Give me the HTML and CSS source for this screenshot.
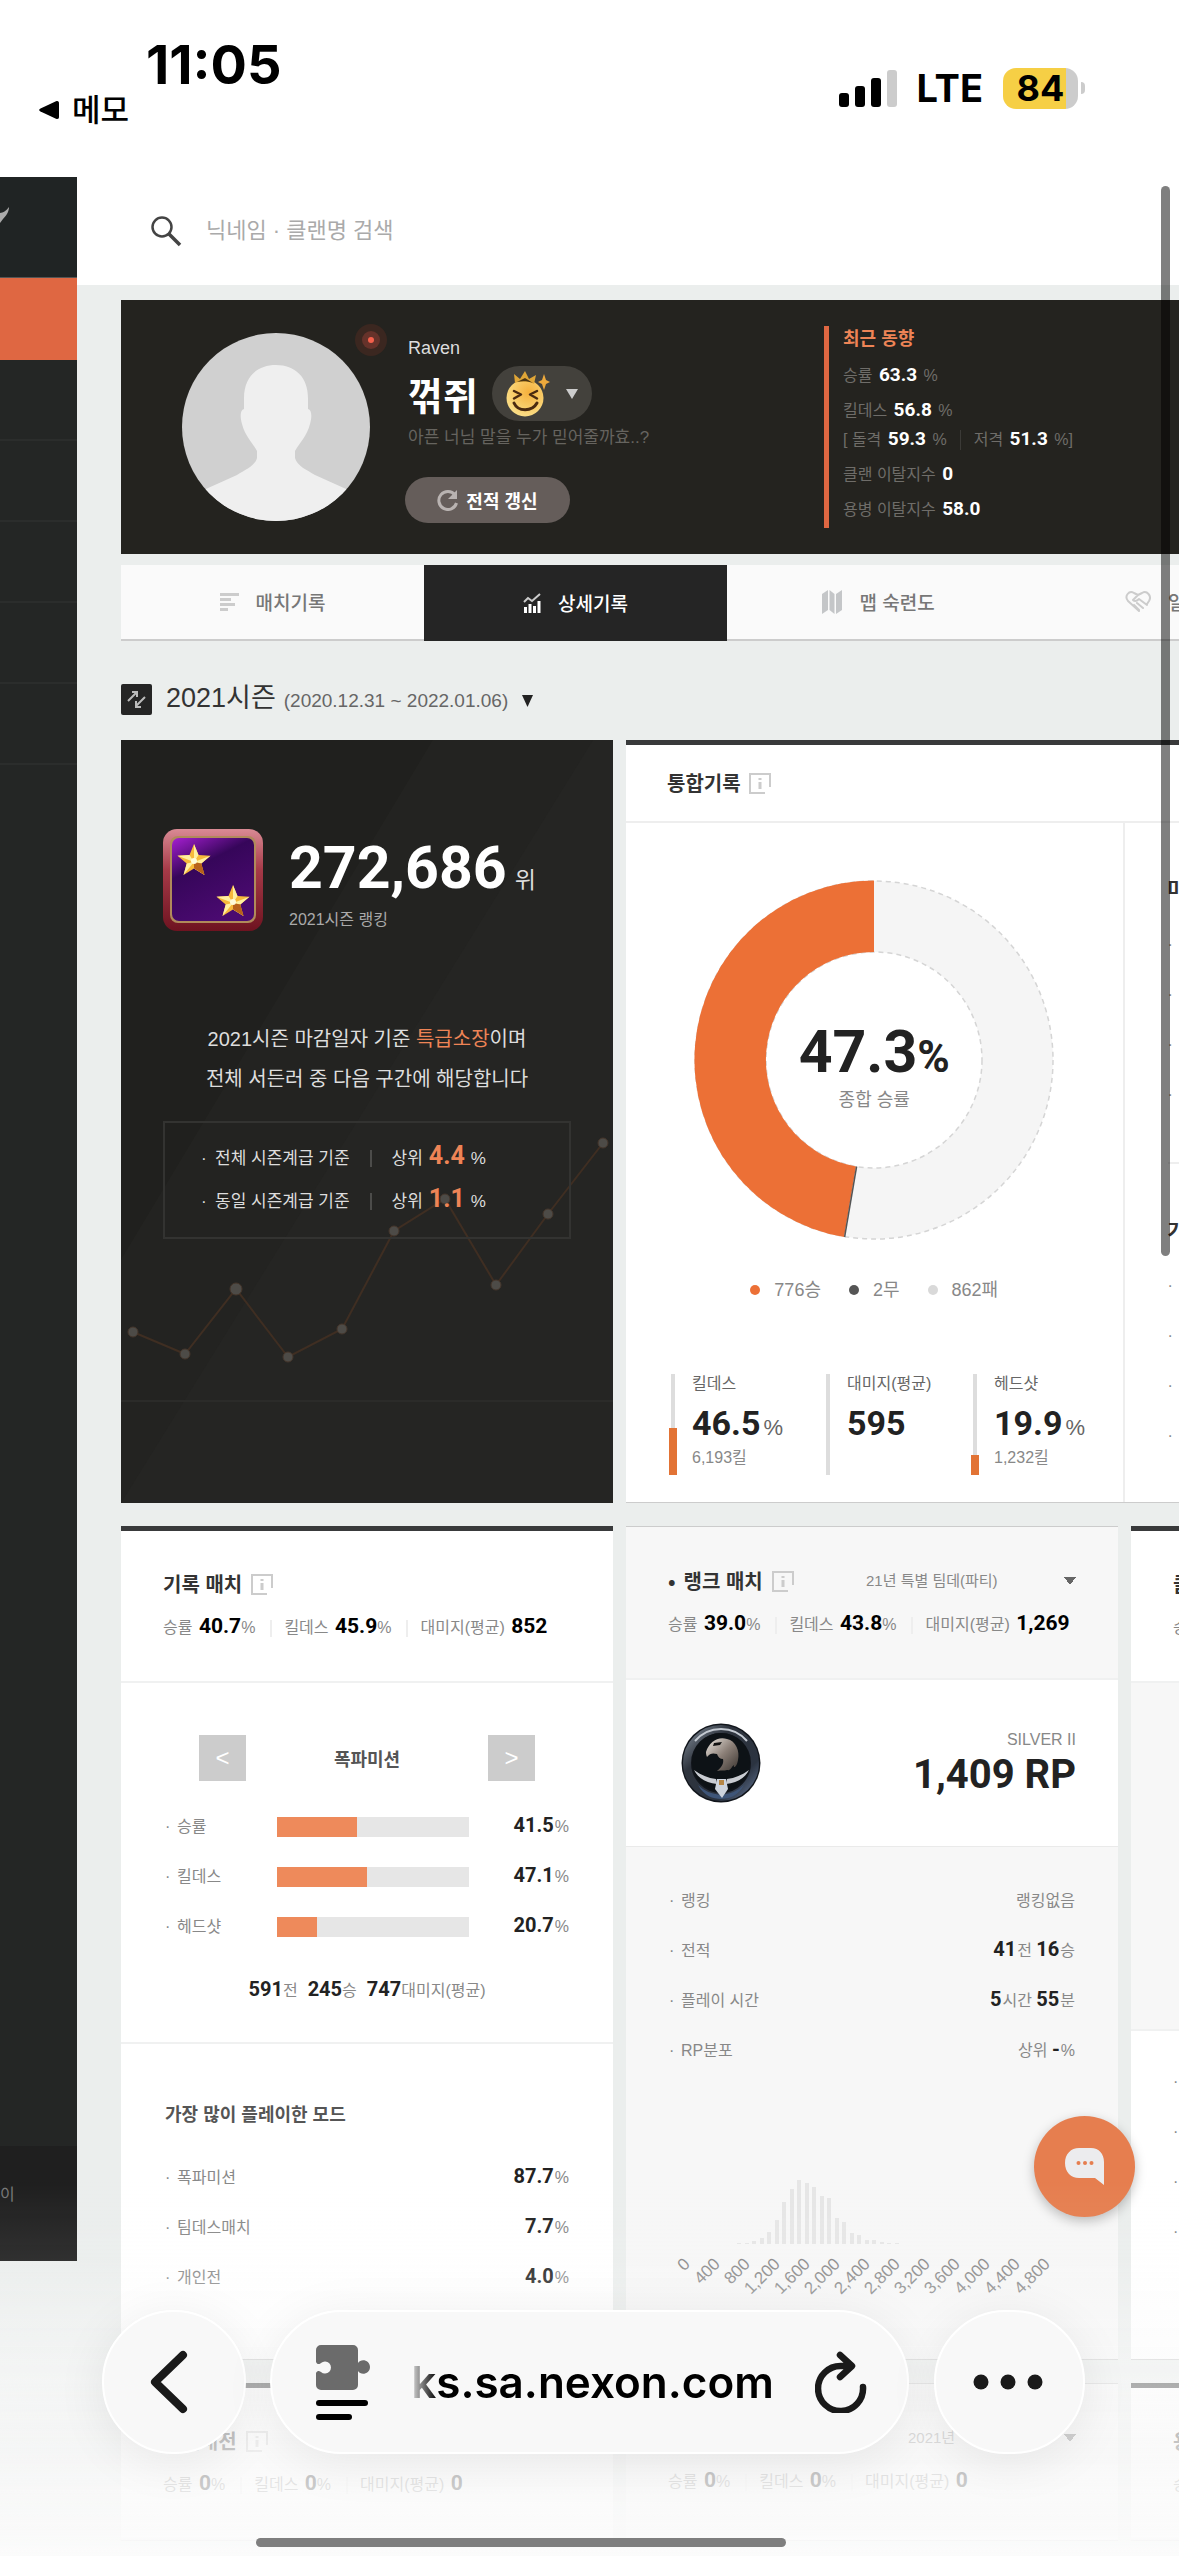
FILE: index.html
```html
<!DOCTYPE html>
<html lang="ko">
<head>
<meta charset="utf-8">
<meta name="viewport" content="width=device-width, initial-scale=1">
<title>상세기록</title>
<link rel="stylesheet" href="styles.css">
</head>
<body>
<svg class="defs" aria-hidden="true">
  <symbol id="info" viewBox="0 0 22 21"><path d="M16 20H1V1h20v13" fill="none" stroke="#ccc" stroke-width="2"/><path d="M9.500 5h3v2h-3zM9.500 9h3v7h-3z" fill="#ccc"/></symbol>
  <symbol id="star" viewBox="0 0 34 34"><path d="M17 1l4.500 11 12 .8-9.200 7.600L27.500 32 17 25.500 6.500 32l3.200-11.600L.5 12.800l12-.8z" fill="#f7b93b"/><path d="M17 1v18l4.500-7zM33.500 12.800L17 19l7.300 1.400zM27.500 32L17 19v6.500zM6.500 32L17 19l-7.300 1.400zM.5 12.800L17 19l-4.500-7z" fill="#fff0a0"/><path d="M17 25.500l10.500 6.500-3.200-11.600L17 19z" fill="#b8621a"/><circle cx="17" cy="18" r="3" fill="#fffbd8"/></symbol>
</svg>

<div class="status">
  <div class="status-left">
    <time class="clock">11:05</time>
    <a class="back-app" href="#"><svg width="22" height="20" viewBox="0 0 22 20"><path d="M2.500 8.500L18 1.200c2-.8 3 .2 3 2v13.600c0 1.800-1 2.800-3 2L2.500 11.500c-1.800-1-1.800-2 0-3z"/></svg>메모</a>
  </div>
  <div class="status-right">
    <svg width="58" height="37" viewBox="0 0 58 37"><rect x="0" y="23" width="10" height="14" rx="3"/><rect x="16" y="16" width="10" height="21" rx="3"/><rect x="32" y="8" width="10" height="29" rx="3"/><rect x="48" y="0" width="10" height="37" rx="3" fill="#ccc"/></svg>
    <span class="lte">LTE</span>
    <span class="battery"><span class="battery-body">84</span><i></i></span>
  </div>
</div>

<div class="page">
  <nav class="side">
    <a class="side-logo" href="#"><svg width="12" height="18" viewBox="0 0 12 18"><path d="M0 6C3 6 7 3 9 0 9 5 6 9 3 12L0 16z" fill="#aaa"/></svg></a>
    <a class="side-item on" href="#"></a>
    <a class="side-item" href="#"></a><a class="side-item" href="#"></a><a class="side-item" href="#"></a><a class="side-item" href="#"></a><a class="side-item" href="#"></a>
    <div class="side-foot">이</div>
  </nav>

  <div class="body">
    <form class="search">
      <svg width="32" height="32" viewBox="0 0 32 32" fill="none" stroke="#444"><circle cx="12" cy="12" r="9.500" stroke-width="2.500"/><path d="M19 19l11 11" stroke-width="3.500"/></svg>
      <input type="text" aria-label="검색" placeholder="닉네임 · 클랜명 검색">
    </form>

    <main>
      <section class="profile">
        <div class="avatar">
          <svg viewBox="0 0 188 188"><defs><clipPath id="face"><circle cx="94" cy="94" r="94"/></clipPath></defs><circle cx="94" cy="94" r="94" fill="#d0d0d0"/><path clip-path="url(#face)" d="M62 65c0-21 13-33 32-33s32 12 32 33v11c4 1 4 8 2 15-3 12-10 18-15 27v7c2 8 12 12 20 17l40 18v30H15v-30l40-18c8-5 18-9 20-17v-7c-5-9-12-15-15-27-2-7-2-14 2-15z" fill="#efefef"/></svg>
          <svg class="live" viewBox="0 0 32 32"><circle cx="16" cy="16" r="16" fill="#3b2720"/><circle cx="16" cy="16" r="9" fill="#66322a"/><circle cx="16" cy="16" r="3" fill="#f4604c"/></svg>
        </div>
        <div class="who">
          <div class="clan">Raven</div>
          <div class="name-row">
            <h1>꺾쥐</h1>
            <button class="emoji" type="button" aria-label="이모티콘">
              <svg width="44" height="48" viewBox="0 0 44 48"><defs><radialGradient id="skin" cx=".6" cy=".35" r=".7"><stop offset="0" stop-color="#f5b03c"/><stop offset="1" stop-color="#fbe08a"/></radialGradient></defs><circle cx="19" cy="28" r="18.500" fill="url(#skin)"/><path d="M9 13L8 4l6 5 5-8 4 8 7-4-2 9c-6-3-13-3-19-1z" fill="#e0a637"/><path d="M11 12l8-4 8 5c-5-2-11-2-16-1z" fill="#4a3413"/><path d="M38 4l2 6 4 2-4 2-2 6-2-6-4-2 4-2z" fill="#eda93c"/><g fill="none" stroke="#4a2a10" stroke-width="2.500" stroke-linecap="round" stroke-linejoin="round"><path d="M8 21l7 3.500-7 4M31 21l-7 3.500 7 4"/><path d="M8 33c4 9 18 9 23 0" stroke-width="3"/></g></svg>
              <svg width="12" height="10" viewBox="0 0 12 10"><path d="M0 0h12L6 10z" fill="#ccc"/></svg>
            </button>
          </div>
          <p class="motto">아픈 너님 말을 누가 믿어줄까효..?</p>
          <button class="refresh" type="button"><svg width="22" height="22" viewBox="0 0 22 22"><path d="M18 6a9 9 0 1 0 1.500 8" fill="none" stroke="#b9b3b1" stroke-width="3"/><path d="M20 1v9h-9z" fill="#b9b3b1"/></svg>전적 갱신</button>
        </div>
        <div class="trend">
          <h2>최근 동향</h2>
          <p>승률 <b>63.3</b> %</p>
          <p>킬데스 <b>56.8</b> %</p>
          <p class="split"><span>[ 돌격 <b>59.3</b> %</span><i></i><span>저격 <b>51.3</b> %]</span></p>
          <p>클랜 이탈지수 <b>0</b></p>
          <p>용병 이탈지수 <b>58.0</b></p>
        </div>
      </section>

      <nav class="tabs">
        <a href="#"><svg width="19" height="18" viewBox="0 0 19 18" fill="#ccc"><path d="M0 0h19v3H0zM0 5h11v3H0zM0 10h15v3H0zM0 15h8v3H0z"/></svg>매치기록</a>
        <a href="#" class="on"><svg width="18" height="20" viewBox="0 0 18 20" fill="#fff"><path d="M1 14h3v6H1zM5.500 11h3v9h-3zM10 13h3v7h-3zM14.500 8h3v12h-3z"/><path d="M1 9l4-4 4 3 8-7" fill="none" stroke="#ccc" stroke-width="2"/></svg>상세기록</a>
        <a href="#"><svg width="20" height="24" viewBox="0 0 20 24" fill="#c4c6c8"><path d="M0 4l6-4v20l-6 4zM7.500 0l5 4v20l-5-4zM14 4l6-4v20l-6 4z"/></svg>맵 숙련도</a>
        <a href="#" class="cut"><svg width="26" height="22" viewBox="0 0 26 22" fill="none" stroke="#ccc" stroke-width="2" stroke-linecap="round" stroke-linejoin="round"><path d="M14 20L3 10C-1 5 4-1 9 2l4 2 4-2c5-3 10 3 7 8l-2 3M13 4L8 9c2 2 4 1 6-1l8 6M12 12l6 5M9 14l5 5"/></svg>일</a>
      </nav>

      <h2 class="season">
        <svg width="31" height="31" viewBox="0 0 31 31"><rect width="31" height="31" rx="2" fill="#252525"/><g fill="none" stroke="#bbb" stroke-width="2"><path d="M7 17l9-9M11 8h5v5M24 13l-9 9M15 17v6h5"/></g></svg>
        <button type="button">2021시즌 <small>(2020.12.31 ~ 2022.01.06)</small><svg width="11" height="12" viewBox="0 0 11 12"><path d="M0 0h11L5.500 12z" fill="#222"/></svg></button>
      </h2>

      <div class="board">
        <section class="card rank-card">
          <svg class="rank-bg" viewBox="0 0 492 763" preserveAspectRatio="none">
            <path d="M0 0h312L0 520z" fill="#20201e"/><path d="M312 0h160L0 763V520z" fill="#232321"/>
            <path d="M0 661h492" stroke="#2b2b29" stroke-width="2"/>
            <polyline points="12,592 64,614 115,549 167,617 221,589 273,491 324,459 375,545 427,474 482,403" fill="none" stroke="#3f2e22" stroke-width="2"/>
            <g fill="#4d4b47" stroke="#45362b"><circle cx="12" cy="592" r="5"/><circle cx="64" cy="614" r="5"/><circle cx="115" cy="549" r="6"/><circle cx="167" cy="617" r="5"/><circle cx="221" cy="589" r="5"/><circle cx="273" cy="491" r="5"/><circle cx="324" cy="459" r="5"/><circle cx="375" cy="545" r="5"/><circle cx="427" cy="474" r="5"/><circle cx="482" cy="403" r="5"/></g>
          </svg>
          <div class="rank-top">
            <svg width="100" height="102" viewBox="0 0 100 102">
              <defs><linearGradient id="frame" x1="0" y1="0" x2="0" y2="1"><stop offset="0" stop-color="#d98a94"/><stop offset=".4" stop-color="#a63a48"/><stop offset="1" stop-color="#6e1320"/></linearGradient><linearGradient id="plum" x1="0" y1="0" x2=".5" y2="1"><stop offset="0" stop-color="#a51fd0"/><stop offset=".4" stop-color="#36065a"/><stop offset="1" stop-color="#4a0a70"/></linearGradient></defs>
              <rect width="100" height="102" rx="14" fill="url(#frame)"/><rect x="7" y="7" width="86" height="87" rx="8" fill="#b08a5a"/><rect x="9" y="9" width="82" height="83" rx="7" fill="url(#plum)"/>
              <use href="#star" x="14" y="14" width="34" height="34"/><use href="#star" x="53" y="55" width="34" height="34"/>
            </svg>
            <div><p class="rank-no"><b>272,686</b>위</p><p class="rank-sub">2021시즌 랭킹</p></div>
          </div>
          <p class="rank-text">2021시즌 마감일자 기준 <em>특급소장</em>이며<br>전체 서든러 중 다음 구간에 해당합니다</p>
          <ul class="rank-box">
            <li><span>전체 시즌계급 기준</span><i></i>상위<b>4.4</b>%</li>
            <li><span>동일 시즌계급 기준</span><i></i>상위<b>1.1</b>%</li>
          </ul>
        </section>

        <section class="card total">
          <header><h3>통합기록</h3><svg class="info"><use href="#info"/></svg></header>
          <div class="total-body">
            <div class="total-left">
              <div class="donut">
                <svg viewBox="0 0 360 360">
                  <circle cx="180" cy="180" r="143.500" fill="none" stroke="#f5f5f5" stroke-width="71"/>
                  <circle cx="180" cy="180" r="179" fill="none" stroke="#d5d5d5" stroke-width="1.500" stroke-dasharray="5 4"/>
                  <circle cx="180" cy="180" r="108" fill="none" stroke="#d5d5d5" stroke-width="1.500" stroke-dasharray="5 4"/>
                  <path d="M180 0.500A179.500 179.500 0 0 0 150.100 357L162 286.500A108 108 0 0 1 180 72z" fill="#ec7036"/>
                  <path d="M150.600 357L162.600 286.500" stroke="#555" stroke-width="1.500"/>
                </svg>
                <div><p class="pct">47.3<small>%</small></p><p class="pct-sub">종합 승률</p></div>
              </div>
              <ul class="legend"><li class="win">776승</li><li class="tie">2무</li><li class="loss">862패</li></ul>
              <div class="trio">
                <div><i class="gauge"><i style="height:46.5%"></i></i><p>킬데스<strong><b>46.5</b>%</strong><span>6,193킬</span></p></div>
                <div><i class="gauge"></i><p>대미지(평균)<strong><b>595</b></strong></p></div>
                <div><i class="gauge"><i style="height:19.9%"></i></i><p>헤드샷<strong><b>19.9</b>%</strong><span>1,232킬</span></p></div>
              </div>
            </div>
            <div class="total-right">
              <div class="part"><h4>마</h4><ul class="rows"><li></li><li></li><li></li><li></li></ul></div>
              <div class="part low"><h4>가</h4><ul class="rows"><li></li><li></li><li></li><li></li></ul></div>
            </div>
          </div>
        </section>

        <section class="card">
          <header class="match">
            <div class="title"><h3>기록 매치</h3><svg class="info"><use href="#info"/></svg></div>
            <ul class="stats"><li>승률 <b>40.7</b>%</li><li>킬데스 <b>45.9</b>%</li><li>대미지(평균) <b>852</b></li></ul>
          </header>
          <div class="mode">
            <div class="pager"><button type="button" aria-label="이전">&lt;</button><h4>폭파미션</h4><button type="button" aria-label="다음">&gt;</button></div>
            <ul class="rows bars">
              <li><span>승률</span><div class="bar"><i style="width:41.5%"></i></div><em><b>41.5</b>%</em></li>
              <li><span>킬데스</span><div class="bar"><i style="width:47.1%"></i></div><em><b>47.1</b>%</em></li>
              <li><span>헤드샷</span><div class="bar"><i style="width:20.7%"></i></div><em><b>20.7</b>%</em></li>
            </ul>
            <p class="sum"><span><b>591</b>전</span><span><b>245</b>승</span><span><b>747</b>대미지(평균)</span></p>
          </div>
          <div class="most">
            <h4>가장 많이 플레이한 모드</h4>
            <ul class="rows"><li><span>폭파미션</span><em><b>87.7</b>%</em></li><li><span>팀데스매치</span><em><b>7.7</b>%</em></li><li><span>개인전</span><em><b>4.0</b>%</em></li></ul>
          </div>
        </section>

        <section class="card ranked">
          <header class="match">
            <div class="title"><h3>랭크 매치</h3><svg class="info"><use href="#info"/></svg>
              <select aria-label="시즌"><option>21년 특별 팀데(파티)</option></select></div>
            <ul class="stats"><li>승률 <b>39.0</b>%</li><li>킬데스 <b>43.8</b>%</li><li>대미지(평균) <b>1,269</b></li></ul>
          </header>
          <div class="tier">
            <svg width="80" height="80" viewBox="0 0 80 80"><defs><linearGradient id="rim" x1="0" y1="0" x2="1" y2="1"><stop offset="0" stop-color="#7d8794"/><stop offset=".3" stop-color="#2e343d"/><stop offset=".75" stop-color="#2b3340"/><stop offset="1" stop-color="#5f7190"/></linearGradient><linearGradient id="steel" x1="0" y1="0" x2="1" y2="1"><stop offset="0" stop-color="#ece8e2"/><stop offset=".5" stop-color="#8c8078"/><stop offset="1" stop-color="#3a3430"/></linearGradient></defs>
              <circle cx="40" cy="40" r="39.500" fill="#11151b"/><circle cx="40" cy="40" r="34" fill="none" stroke="url(#rim)" stroke-width="8"/><path d="M14 18A34 34 0 0 1 66 18" fill="none" stroke="#c4cad2" stroke-width="2"/><circle cx="40" cy="39" r="29" fill="#0d1216"/>
              <path d="M25 29c3-10 12-16 21-13 9 2 13 12 11 21-1 7-5 9-4 5-3 2-3 6-7 5-3 1-5 0-10 1 5-4 7-8 6-12-3 0-5-2-6-5-4-1-7-1-10 3-1-2-1-4-1-5z" fill="url(#steel)"/><path d="M33 20l8-1-2 3-7 1z" fill="#111"/>
              <path d="M13 47c7 5 14 8 22 9l1 5c-11-1-19-6-23-14zM68 47c-7 5-14 8-22 9l-1 5c11-1 19-6 23-14z" fill="#c9ccd2"/><path d="M17 62c6 6 14 9 23 10 9-1 17-4 23-10-6 11-15 14-23 14s-17-3-23-14z" fill="#3e5578"/><path d="M36 56h9l2 10-6 9-7-9z" fill="#cdd3dc"/><path d="M38 57h5v5h-5z" fill="#b58645"/></svg>
            <div><p>SILVER II</p><strong>1,409 RP</strong></div>
          </div>
          <ul class="rows">
            <li><span>랭킹</span><em>랭킹없음</em></li>
            <li><span>전적</span><em><b>41</b>전 <b>16</b>승</em></li>
            <li><span>플레이 시간</span><em><b>5</b>시간 <b>55</b>분</em></li>
            <li><span>RP분포</span><em>상위 <b>-</b>%</em></li>
          </ul>
          <svg class="hist" viewBox="0 0 492 170">
            <g fill="#e6e6e6"><path d="M111 75h4v1h-4zM119 75h4v1h-4zM126 73h4v3h-4zM134 70h4v6h-4zM141 64h4v12h-4zM149 52h4v24h-4zM156 34h4v42h-4zM164 21h4v55h-4zM171 12h4v64h-4zM179 15h4v61h-4zM186 19h4v57h-4zM194 28h4v48h-4zM201 30h4v46h-4zM209 50h4v26h-4zM216 54h4v22h-4zM224 65h4v11h-4zM231 67h4v9h-4zM239 72h4v4h-4zM246 72h4v4h-4zM254 74h4v2h-4zM261 75h4v1h-4zM269 75h4v1h-4z"/></g>
            <g class="ticks"><text transform="translate(65 97) rotate(-45)">0</text><text transform="translate(95 97) rotate(-45)">400</text><text transform="translate(125 97) rotate(-45)">800</text><text transform="translate(155 97) rotate(-45)">1,200</text><text transform="translate(185 97) rotate(-45)">1,600</text><text transform="translate(215 97) rotate(-45)">2,000</text><text transform="translate(245 97) rotate(-45)">2,400</text><text transform="translate(275 97) rotate(-45)">2,800</text><text transform="translate(305 97) rotate(-45)">3,200</text><text transform="translate(335 97) rotate(-45)">3,600</text><text transform="translate(365 97) rotate(-45)">4,000</text><text transform="translate(395 97) rotate(-45)">4,400</text><text transform="translate(425 97) rotate(-45)">4,800</text></g>
          </svg>
        </section>

        <section class="card third">
          <header class="match"><div class="title"><h3>클</h3></div><ul class="stats"><li>승</li></ul></header>
          <div class="blank"></div>
          <ul class="rows"><li></li><li></li><li></li><li></li></ul>
        </section>

        <section class="card">
          <header class="match"><div class="title"><h3>클랜대전</h3><svg class="info"><use href="#info"/></svg></div>
            <ul class="stats"><li>승률 <b>0</b>%</li><li>킬데스 <b>0</b>%</li><li>대미지(평균) <b>0</b></li></ul></header>
        </section>
        <section class="card ranked">
          <header class="match"><div class="title"><h3>랭크전</h3><select class="year" aria-label="연도"><option>2021년</option></select></div>
            <ul class="stats"><li>승률 <b>0</b>%</li><li>킬데스 <b>0</b>%</li><li>대미지(평균) <b>0</b></li></ul></header>
        </section>
        <section class="card"><header class="match"><div class="title"><h3>용</h3></div><ul class="stats"><li>승</li></ul></header></section>
      </div>
    </main>
  </div>
</div>

<div class="scrollbar"></div>
<button class="chat" type="button" aria-label="채팅"><svg width="40" height="37" viewBox="0 0 40 37"><path d="M14 0h12c8 0 13 6 13 14v23l-9-7H14C6 30 0 24 0 15S6 0 14 0z" fill="#ececee"/><g fill="#e67e4f"><circle cx="13.500" cy="15" r="2"/><circle cx="20" cy="15" r="2"/><circle cx="26.500" cy="15" r="2"/></g></svg></button>
<div class="veil"></div>
<nav class="browser">
  <button class="glass round" type="button" aria-label="뒤로"><svg width="38" height="64" viewBox="0 0 38 64"><path d="M33 5L5 32l28 27" fill="none" stroke="#1a1a1a" stroke-width="8" stroke-linecap="round" stroke-linejoin="round"/></svg></button>
  <div class="glass address">
    <svg width="54" height="75" viewBox="0 0 54 75"><path d="M5 0h32a5 5 0 0 1 5 5v13c3-5 12-3 12 4s-9 9-12 4v14a5 5 0 0 1-5 5H5a5 5 0 0 1-5-5V28c2-4 5-1 5-1a6 6 0 1 0 0-9s-3 3-5-1V5a5 5 0 0 1 5-5z" fill="#6b6b6b"/><rect y="55" width="52" height="6" rx="3"/><rect y="69" width="36" height="6" rx="3"/></svg>
    <span class="url">ks.sa.nexon.com</span>
    <button type="button" aria-label="새로고침"><svg width="52" height="62" viewBox="0 0 52 62" fill="none" stroke="#1a1a1a" stroke-width="6.500" stroke-linecap="round" stroke-linejoin="round"><path d="M48 36A22.500 22.500 0 1 1 26 15h10M25 4l12 11-12 11"/></svg></button>
  </div>
  <button class="glass more" type="button" aria-label="더보기"><svg width="70" height="16" viewBox="0 0 70 16" fill="#1a1a1a"><circle cx="8" cy="8" r="7.500"/><circle cx="35" cy="8" r="7.500"/><circle cx="62" cy="8" r="7.500"/></svg></button>
</nav>
<div class="home"></div>
</body>
</html>
```
FILE: styles.css
```css
* { box-sizing: border-box; margin: 0; padding: 0; }
html, body { height: 100%; }
body {
  display: flex; flex-direction: column; overflow: hidden;
  background: #fff; color: #888;
  font: 16px/24px "Liberation Sans", "Noto Sans CJK KR", sans-serif;
}
b, .pct, .tier strong { font-family: Roboto, "Noto Sans CJK KR", sans-serif; font-weight: 700; }
b { line-height: 1; }
ul { list-style: none; }
em, i { font-style: normal; }
a { color: inherit; text-decoration: none; }
button, input, select { font: inherit; color: inherit; border: 0; background: none; }
svg { flex: none; display: block; }
.defs { position: absolute; width: 0; height: 0; }
h3, h4 { font-size: 20px; line-height: 26px; font-weight: 700; color: #333; font-family: "Noto Sans CJK KR", sans-serif; }

/* phone status bar */
.status { flex: none; height: 177px; display: flex; justify-content: space-between; color: #000; font-family: Inter, "Noto Sans CJK KR", sans-serif; }
.status-left { padding: 36px 0 0 38px; }
.clock { display: block; padding-left: 108px; font-size: 54px; line-height: 58px; font-weight: 700; }
.back-app { display: flex; align-items: center; gap: 12px; font-size: 31px; line-height: 32px; font-weight: 500; }
.status-right { display: flex; align-items: center; gap: 20px; height: 76px; margin: 50px 94px 0 0; }
.lte { font-size: 38px; font-weight: 700; }
.battery { display: flex; align-items: center; gap: 3px; }
.battery-body { width: 75px; height: 41px; border-radius: 13px; background: linear-gradient(90deg, #f6cf45 84%, #ccc 84%); font-size: 36px; line-height: 41px; font-weight: 700; text-align: center; }
.battery i { width: 4px; height: 12px; border-radius: 0 4px 4px 0; background: #ccc; }

.page { flex: 1; min-height: 0; display: flex; align-items: flex-start; overflow: hidden; background: #ebeeed; }

/* left menu */
.side { flex: none; width: 77px; height: calc(100vh - 472px); display: flex; flex-direction: column; background: #242625; }
.side-logo { height: 101px; padding-top: 30px; background: #202424; border-bottom: 1px solid #555; }
.side-item { height: 81px; border-bottom: 2px solid #2b2d2c; }
.side-item.on { height: 82px; background: #df6742; border: 0; }
.side-foot { margin-top: auto; height: 115px; line-height: 98px; background: #1f1f1f; color: #777; }

.body { flex: 1; min-width: 0; overflow: hidden; }
.search { display: flex; align-items: center; gap: 24px; height: 108px; padding: 0 73px; background: #fff; }
.search input { flex: 1; min-width: 0; font-size: 22px; line-height: 32px; outline: 0; }
.search input::placeholder { color: #aaa; opacity: 1; }
main { padding: 15px 0 0 44px; }

/* profile */
.profile { display: flex; height: 254px; padding: 0 0 0 61px; background: #24231f; }
.avatar { position: relative; flex: none; align-self: center; width: 188px; }
.live { position: absolute; top: -9px; right: -17px; width: 32px; }
.who { flex: none; width: 416px; margin-left: 38px; padding-top: 36px; }
.clan { color: #ddd; font-size: 18px; }
.name-row { display: flex; align-items: center; gap: 14px; margin-top: 6px; }
h1 { color: #fff; font: 700 38px/54px "Noto Sans CJK KR", sans-serif; }
.emoji { display: flex; align-items: center; gap: 16px; height: 55px; padding: 0 14px; border-radius: 28px; background: #43413c; }
.motto { margin-top: 5px; color: #66645f; font-size: 17px; }
.refresh { display: flex; align-items: center; justify-content: center; gap: 7px; width: 165px; height: 46px; margin: 27px 0 0 -3px; border-radius: 23px; background: #655d5a; color: #fff; font: 700 18px/26px "Noto Sans CJK KR", sans-serif; }
.trend { align-self: flex-start; height: 202px; margin-top: 26px; padding-left: 14px; border-left: 5px solid #df6742; color: #6f6d69; white-space: nowrap; }
.trend h2 { color: #ee8456; font: 700 18px/22px "Noto Sans CJK KR", sans-serif; margin-bottom: 10px; }
.trend p { line-height: 35px; }
.trend b { margin: 0 2px; color: #fff; font-size: 19px; }
.trend .split { display: flex; align-items: center; line-height: 24px; margin-bottom: 5px; }
.split i { width: 1px; height: 20px; margin: 0 13px; background: #3b3a37; }

.tabs { display: flex; margin-top: 11px; border-bottom: 2px solid #ccc; background: #fafafa; }
.tabs a { flex: 0 0 303px; display: flex; align-items: center; justify-content: center; gap: 17px; height: 74px; color: #777; font: 500 19px/26px "Noto Sans CJK KR", sans-serif; }
.tabs .on { height: 76px; margin-bottom: -2px; background: #252525; color: #fff; }
.tabs .cut { justify-content: flex-start; padding-left: 95px; }

.season { display: flex; align-items: center; gap: 14px; height: 99px; padding-top: 18px; font-weight: 400; color: #333; }
.season button { display: flex; align-items: baseline; gap: 8px; font-size: 27px; line-height: 34px; }
.season small { font-size: 19px; color: #666; }
.season button svg { margin-left: 6px; }

/* card grid; the third column runs past the right edge */
.board { display: grid; grid-template-columns: repeat(3, 492px); gap: 23px 13px; }
.card { border-top: 5px solid #393a3b; border-bottom: 1px solid #ccc; background: #fff; }

.rank-card { position: relative; height: 763px; padding: 89px 42px 0; border: 0; background: #252523; color: #ddd; }
.rank-bg { position: absolute; inset: 0; width: 100%; height: 100%; }
.rank-top, .rank-text, .rank-box { position: relative; }
.rank-top { display: flex; gap: 26px; height: 102px; }
.rank-no { padding-top: 9px; font-size: 23px; line-height: 56px; white-space: nowrap; }
.rank-no b { margin-right: 8px; font-size: 59px; color: #fff; }
.rank-sub { color: #aaa; }
.rank-text { margin-top: 88px; font-size: 20px; line-height: 40px; text-align: center; white-space: nowrap; }
.rank-text em { color: #ee8456; }
.rank-box { margin-top: 22px; padding: 14px 36px; border: 2px solid #333331; }
.rank-box li { display: flex; align-items: baseline; font-size: 17px; line-height: 43px; height: 43px; }
.rank-box li::before { content: "·"; width: 14px; }
.rank-box i { width: 2px; height: 17px; align-self: center; margin: 0 20px; background: #4c4c4a; }
.rank-box b { margin: 0 6px; color: #ee8456; font-size: 25px; }

.total { grid-column: span 2; }
.total header { display: flex; align-items: center; gap: 8px; height: 78px; padding-left: 41px; border-bottom: 2px solid #eee; }
.info { width: 22px; height: 21px; }
.total-body { display: flex; height: 679px; }
.total-left { flex: none; width: 50%; padding-top: 57px; border-right: 2px solid #eee; }
.donut { display: grid; place-items: center; }
.donut > * { grid-area: 1 / 1; }
.donut svg { width: 360px; }
.donut div { padding-top: 8px; text-align: center; }
.pct { color: #222; font-size: 59px; line-height: 72px; }
.pct small { font-size: 44px; line-height: 1; }
.pct-sub { font-size: 18px; }
.legend { display: flex; justify-content: center; gap: 28px; margin-top: 38px; font-size: 18px; }
.legend li { display: flex; align-items: center; gap: 14px; }
.legend li::before { content: ""; width: 10px; height: 10px; border-radius: 50%; background: #d9d9d9; }
.legend .win::before { background: #ec7036; }
.legend .tie::before { background: #555; }
.trio { display: grid; grid-template-columns: 155px 147px auto; margin: 72px 0 0 43px; }
.trio > div { display: flex; gap: 15px; }
.trio p { color: #666; line-height: 20px; }
.trio strong { display: block; height: 36px; margin: 12px 0 6px; font-size: 22px; line-height: 36px; font-weight: 400; }
.trio strong b { margin-right: 3px; font-size: 34px; color: #222; }
.trio span { color: #888; }
.gauge { display: flex; align-items: flex-end; width: 8px; height: 101px; background: linear-gradient(#ddd, #ddd) center / 4px 100% no-repeat; }
.gauge i { width: 8px; background: #e27335; }
.total-right { flex: 1; padding-left: 43px; }
.part { height: 341px; padding-top: 53px; border-bottom: 2px solid #eee; }
.part.low { border: 0; }
.part .rows { padding-top: 18px; }

/* match cards */
.match { padding: 40px 42px; border-bottom: 2px solid #f0f1f1; }
.title { display: flex; align-items: center; gap: 9px; height: 26px; }
.stats { display: flex; height: 26px; margin-top: 18px; line-height: 26px; white-space: nowrap; }
.stats b { font-size: 21px; color: #000; margin-left: 2px; }
.stats li + li { margin-left: 15px; padding-left: 14px; background: linear-gradient(#eee, #eee) left / 2px 17px no-repeat; }
.rows li { display: flex; align-items: center; height: 50px; }
.rows li::before { content: "·"; width: 12px; }
.rows em { margin-left: auto; }
.rows b, .sum b { color: #222; font-size: 20px; }
.rows em b { margin-right: 1px; }
.mode { padding: 52px 44px 38px; border-bottom: 2px solid #f0f1f1; }
.pager { display: flex; justify-content: space-between; align-items: center; padding: 0 34px; }
.pager h4, .most h4 { font-size: 18px; color: #555; }
.pager button { width: 47px; height: 46px; background: #ccc; color: #fff; font-size: 24px; }
.bars { margin-top: 21px; }
.bars span { width: 100px; }
.bar { width: 192px; height: 20px; background: #e6e6e6; }
.bar i { display: block; height: 100%; background: #ee8a5b; }
.sum { display: flex; justify-content: center; gap: 10px; height: 26px; margin-top: 26px; line-height: 26px; }
.most { padding: 56px 44px; }
.most .rows { margin-top: 27px; }

.ranked { border-top: 1px solid #ccc; background: #f7f7f7; }
.ranked .match { padding-top: 41px; }
.ranked h3::before { content: "•"; margin-right: 8px; }
select { appearance: none; margin-left: auto; width: 210px; font-size: 15px; line-height: 20px; background: linear-gradient(to bottom right, #666 50%, transparent 51%) 204px 6px / 6px 8px no-repeat, linear-gradient(to bottom left, #666 50%, transparent 51%) 198px 6px / 6px 8px no-repeat; }
select.year { width: 168px; background-position: 162px 6px, 156px 6px; }
.tier { display: flex; align-items: center; justify-content: space-between; height: 167px; padding: 0 42px 0 55px; background: #fff; border-bottom: 1px solid #eaeaea; text-align: right; }
.tier strong { display: block; color: #222; font-size: 40px; line-height: 46px; }
.ranked .rows { padding: 29px 43px 0; }
.hist { width: 100%; margin-top: 92px; display: block; }
.ticks { font-size: 17px; fill: #888; text-anchor: end; }
.third .blank { height: 348px; background: #f7f7f7; border-bottom: 2px solid #f0f1f1; }
.third .rows { padding: 26px 42px; }

/* overlays */
.scrollbar { position: fixed; top: 186px; right: 9px; width: 9px; height: 1070px; border-radius: 5px; background: rgba(0, 0, 0, .5); }
.chat { position: fixed; right: 44px; bottom: 339px; width: 101px; height: 101px; display: grid; place-items: center; border-radius: 50%; background: #e67e4f; box-shadow: 0 4px 12px rgba(0, 0, 0, .25); }
.veil { position: fixed; left: 0; right: 0; bottom: 0; height: 376px; pointer-events: none; background: linear-gradient(rgba(250, 250, 250, 0), rgba(250, 250, 250, .08) 21%, rgba(250, 250, 250, .18) 27%, rgba(250, 250, 250, .6) 54%, rgba(248, 248, 248, .76) 72%, rgba(252, 252, 252, .92)); }
.browser { position: fixed; left: 102px; right: 94px; bottom: 102px; display: flex; justify-content: space-between; height: 144px; }
.glass { display: flex; align-items: center; justify-content: center; border: 2px solid #fff; border-radius: 72px; background: #f8f8f8; box-shadow: 0 8px 50px rgba(0, 0, 0, .08); }
.round { width: 144px; padding-right: 10px; }
.address { flex: 1; margin: 0 25px 0 24px; padding: 0 40px 0 44px; justify-content: space-between; }
.more { width: 151px; padding-right: 4px; }
.url { font: 600 44px/56px Inter, sans-serif; color: transparent; background: linear-gradient(90deg, #ddd, #000 26px); background-clip: text; -webkit-background-clip: text; }
.home { position: fixed; bottom: 9px; left: 50%; width: 45%; height: 9px; margin-left: -334px; border-radius: 5px; background: #7f7f7f; }
```
